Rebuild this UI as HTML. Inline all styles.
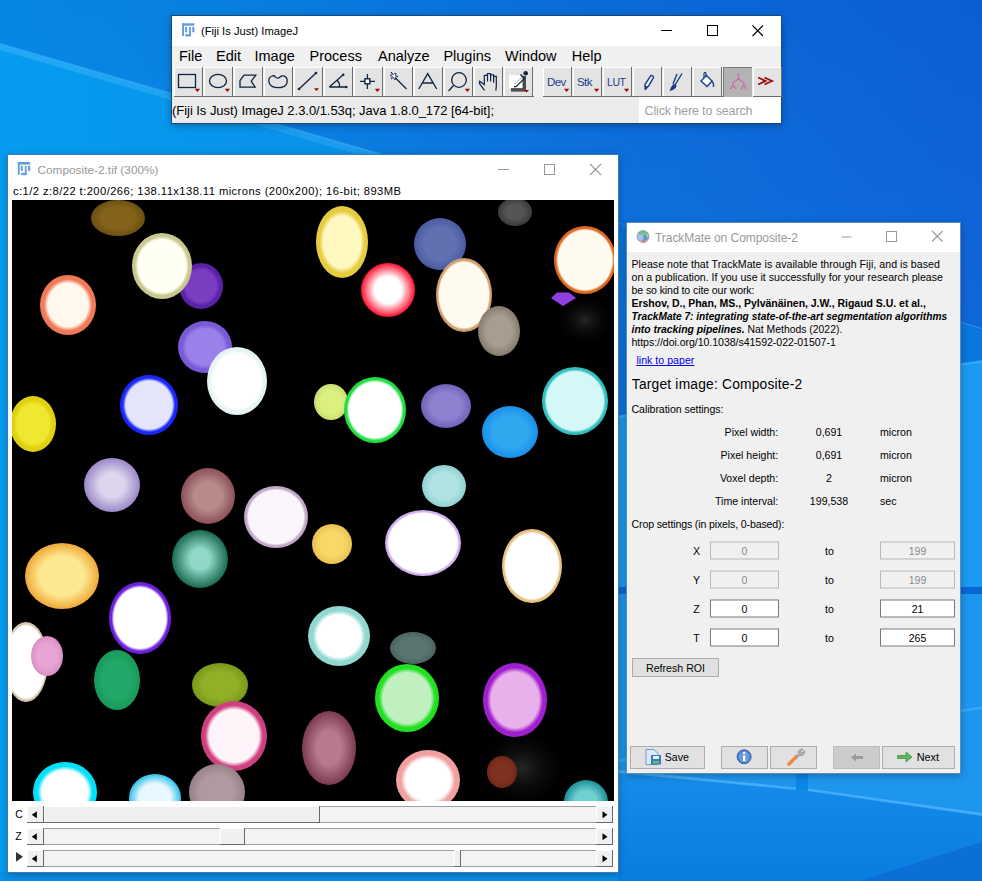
<!DOCTYPE html>
<html><head><meta charset="utf-8">
<style>
*{margin:0;padding:0;box-sizing:border-box}
html,body{width:982px;height:881px;overflow:hidden;background:#0a7fe0}
svg{position:absolute;left:0;top:0}
text{font-family:"Liberation Sans",sans-serif}
.sh{position:absolute;box-shadow:0 2px 7px rgba(0,0,0,0.28)}
</style></head><body>
<svg width="982" height="881" viewBox="0 0 982 881">
<defs>
  <linearGradient id="dgTop" x1="0" y1="0" x2="982" y2="0" gradientUnits="userSpaceOnUse">
    <stop offset="0" stop-color="#0590ea"/>
    <stop offset="0.25" stop-color="#0886e4"/>
    <stop offset="0.6" stop-color="#0a70dc"/>
    <stop offset="1" stop-color="#0c60d6"/>
  </linearGradient>
  <linearGradient id="dgTopV" x1="0" y1="0" x2="0" y2="330" gradientUnits="userSpaceOnUse">
    <stop offset="0" stop-color="#0a4ec0" stop-opacity="0.15"/>
    <stop offset="1" stop-color="#2a90f0" stop-opacity="0.15"/>
  </linearGradient>
  <linearGradient id="dgBase" x1="0" y1="0" x2="982" y2="0" gradientUnits="userSpaceOnUse">
    <stop offset="0" stop-color="#069cf0"/>
    <stop offset="0.5" stop-color="#0a8ce6"/>
    <stop offset="1" stop-color="#1590ea"/>
  </linearGradient>
  <linearGradient id="glow" x1="0" y1="0" x2="0" y2="1">
    <stop offset="0" stop-color="#5cc4ff" stop-opacity="0.55"/>
    <stop offset="1" stop-color="#5cc4ff" stop-opacity="0"/>
  </linearGradient>
</defs>
<rect width="982" height="881" fill="url(#dgBase)"/>
<path d="M0 0 L982 0 L982 329 L0 44 Z" fill="url(#dgTop)"/>
<path d="M0 0 L982 0 L982 329 L0 44 Z" fill="url(#dgTopV)"/>
<path d="M0 44 L982 329 L982 337 L0 50 Z" fill="url(#glow)" opacity="0.6"/>
<path d="M0 43 L982 328 L982 329.5 L0 44.5 Z" fill="#50beff" opacity="0.45"/>
<path d="M618 223 L982 329 L982 361 L618 416.5 Z" fill="#0a76de"/>
<path d="M618 416.5 L982 361 L982 587 L618 587 Z" fill="#1a9af0"/>
<path d="M618 594 L982 594 L982 881 L618 881 Z" fill="#1e96ee"/>
<rect x="618" y="587" width="364" height="7" fill="#0a68d6"/>
<path d="M618 415.5 L982 360 L982 362.5 L618 418 Z" fill="#50c0ff" opacity="0.5"/>
<path d="M618 759.5 L982 706.5 L982 709 L618 762 Z" fill="#50c0ff" opacity="0.45"/>
<linearGradient id="belowE" x1="0" y1="772" x2="0" y2="881" gradientUnits="userSpaceOnUse"><stop offset="0" stop-color="#168cea"/><stop offset="1" stop-color="#0a7ce0"/></linearGradient><path d="M618 772 L796 789 L808 790 L982 815 L982 881 L618 881 Z" fill="url(#belowE)"/>
<path d="M618 770 L796 787.5 L796 790 L618 773 Z" fill="#5ac0ff" opacity="0.6"/>
<path d="M808 788.5 L982 813 L982 816 L808 791 Z" fill="#5ac0ff" opacity="0.6"/>
<rect x="796" y="773" width="12" height="17" fill="#0a86e4"/>
<path d="M860 881 L982 842 L982 881 Z" fill="#0a70d8"/>
<path d="M0 872 L618 872 L618 881 L0 881 Z" fill="#0a8ee8"/>
</svg>
<div class="sh" style="left:171px;top:15px;width:611px;height:109px"></div>
<div class="sh" style="left:7px;top:154px;width:612px;height:719px"></div>
<div class="sh" style="left:626px;top:222px;width:335px;height:552px"></div>
<svg width="982" height="881" viewBox="0 0 982 881">
<defs><radialGradient id="c0"><stop offset="0" stop-color="#84621a"/><stop offset="0.600" stop-color="#84621a"/><stop offset="0.999" stop-color="#6a5010"/><stop offset="1" stop-color="#6a5010"/></radialGradient><radialGradient id="c1"><stop offset="0" stop-color="#7a3cc0"/><stop offset="0.700" stop-color="#7a3cc0"/><stop offset="0.850" stop-color="#5a22a8"/><stop offset="1" stop-color="#5a22a8"/></radialGradient><radialGradient id="c2"><stop offset="0" stop-color="#fffff4"/><stop offset="0.800" stop-color="#fffff4"/><stop offset="0.900" stop-color="#c8c890"/><stop offset="1" stop-color="#c8c890"/></radialGradient><radialGradient id="c3"><stop offset="0" stop-color="#fff8ec"/><stop offset="0.720" stop-color="#fff8ec"/><stop offset="0.860" stop-color="#f07a58"/><stop offset="1" stop-color="#f07a58"/></radialGradient><radialGradient id="c4"><stop offset="0" stop-color="#9a80e8"/><stop offset="0.700" stop-color="#9a80e8"/><stop offset="0.850" stop-color="#7a5ad8"/><stop offset="1" stop-color="#7a5ad8"/></radialGradient><radialGradient id="c5"><stop offset="0" stop-color="#ffffff"/><stop offset="0.800" stop-color="#ffffff"/><stop offset="0.900" stop-color="#e8f4f4"/><stop offset="1" stop-color="#e8f4f4"/></radialGradient><radialGradient id="c6"><stop offset="0" stop-color="#e4e4fa"/><stop offset="0.800" stop-color="#e4e4fa"/><stop offset="0.900" stop-color="#1a28ff"/><stop offset="1" stop-color="#1a28ff"/></radialGradient><radialGradient id="c7"><stop offset="0" stop-color="#f0e830"/><stop offset="0.700" stop-color="#f0e830"/><stop offset="0.850" stop-color="#e0d010"/><stop offset="1" stop-color="#e0d010"/></radialGradient><radialGradient id="c8"><stop offset="0" stop-color="#ddd4ee"/><stop offset="0.450" stop-color="#ddd4ee"/><stop offset="0.999" stop-color="#9a88c8"/><stop offset="1" stop-color="#9a88c8"/></radialGradient><radialGradient id="c9"><stop offset="0" stop-color="#b88a8a"/><stop offset="0.500" stop-color="#b88a8a"/><stop offset="0.999" stop-color="#8a5058"/><stop offset="1" stop-color="#8a5058"/></radialGradient><radialGradient id="c10"><stop offset="0" stop-color="#fbf6fb"/><stop offset="0.860" stop-color="#fbf6fb"/><stop offset="0.930" stop-color="#c0a8c8"/><stop offset="1" stop-color="#c0a8c8"/></radialGradient><radialGradient id="c11"><stop offset="0" stop-color="#fff8c0"/><stop offset="0.720" stop-color="#fff8c0"/><stop offset="0.860" stop-color="#e8cc40"/><stop offset="1" stop-color="#e8cc40"/></radialGradient><radialGradient id="c12"><stop offset="0" stop-color="#6070b0"/><stop offset="0.600" stop-color="#6070b0"/><stop offset="0.999" stop-color="#4a5aa0"/><stop offset="1" stop-color="#4a5aa0"/></radialGradient><radialGradient id="c13"><stop offset="0" stop-color="#555555"/><stop offset="0.500" stop-color="#555555"/><stop offset="0.999" stop-color="#3a3a3a"/><stop offset="1" stop-color="#3a3a3a"/></radialGradient><radialGradient id="c14"><stop offset="0" stop-color="#ffffff"/><stop offset="0.500" stop-color="#ffffff"/><stop offset="0.999" stop-color="#ff1030"/><stop offset="1" stop-color="#ff1030"/></radialGradient><radialGradient id="c15"><stop offset="0" stop-color="#fffaf0"/><stop offset="0.880" stop-color="#fffaf0"/><stop offset="0.940" stop-color="#d0a070"/><stop offset="1" stop-color="#d0a070"/></radialGradient><radialGradient id="c16"><stop offset="0" stop-color="#a89e90"/><stop offset="0.600" stop-color="#a89e90"/><stop offset="0.999" stop-color="#857a6e"/><stop offset="1" stop-color="#857a6e"/></radialGradient><radialGradient id="c17"><stop offset="0" stop-color="#fffaf0"/><stop offset="0.870" stop-color="#fffaf0"/><stop offset="0.935" stop-color="#e06820"/><stop offset="1" stop-color="#e06820"/></radialGradient><radialGradient id="c18"><stop offset="0" stop-color="#dcf080"/><stop offset="0.600" stop-color="#dcf080"/><stop offset="0.999" stop-color="#c8e070"/><stop offset="1" stop-color="#c8e070"/></radialGradient><radialGradient id="c19"><stop offset="0" stop-color="#ffffff"/><stop offset="0.840" stop-color="#ffffff"/><stop offset="0.920" stop-color="#20e040"/><stop offset="1" stop-color="#20e040"/></radialGradient><radialGradient id="c20"><stop offset="0" stop-color="#9080d0"/><stop offset="0.600" stop-color="#9080d0"/><stop offset="0.999" stop-color="#7060b8"/><stop offset="1" stop-color="#7060b8"/></radialGradient><radialGradient id="c21"><stop offset="0" stop-color="#30a8f0"/><stop offset="0.600" stop-color="#30a8f0"/><stop offset="0.999" stop-color="#1a90e8"/><stop offset="1" stop-color="#1a90e8"/></radialGradient><radialGradient id="c22"><stop offset="0" stop-color="#d4f8f8"/><stop offset="0.860" stop-color="#d4f8f8"/><stop offset="0.930" stop-color="#30c0c0"/><stop offset="1" stop-color="#30c0c0"/></radialGradient><radialGradient id="c23"><stop offset="0" stop-color="#b0e4e4"/><stop offset="0.600" stop-color="#b0e4e4"/><stop offset="0.999" stop-color="#90d0d0"/><stop offset="1" stop-color="#90d0d0"/></radialGradient><radialGradient id="c24"><stop offset="0" stop-color="#fce890"/><stop offset="0.600" stop-color="#fce890"/><stop offset="0.999" stop-color="#f0a838"/><stop offset="1" stop-color="#f0a838"/></radialGradient><radialGradient id="c25"><stop offset="0" stop-color="#90d8c8"/><stop offset="0.350" stop-color="#90d8c8"/><stop offset="0.999" stop-color="#1a6a50"/><stop offset="1" stop-color="#1a6a50"/></radialGradient><radialGradient id="c26"><stop offset="0" stop-color="#ffffff"/><stop offset="0.840" stop-color="#ffffff"/><stop offset="0.920" stop-color="#7020e0"/><stop offset="1" stop-color="#7020e0"/></radialGradient><radialGradient id="c27"><stop offset="0" stop-color="#ffffff"/><stop offset="0.900" stop-color="#ffffff"/><stop offset="0.950" stop-color="#d8c8b0"/><stop offset="1" stop-color="#d8c8b0"/></radialGradient><radialGradient id="c28"><stop offset="0" stop-color="#e8a4d4"/><stop offset="0.600" stop-color="#e8a4d4"/><stop offset="0.999" stop-color="#d890c4"/><stop offset="1" stop-color="#d890c4"/></radialGradient><radialGradient id="c29"><stop offset="0" stop-color="#22a868"/><stop offset="0.600" stop-color="#22a868"/><stop offset="0.999" stop-color="#189858"/><stop offset="1" stop-color="#189858"/></radialGradient><radialGradient id="c30"><stop offset="0" stop-color="#90b028"/><stop offset="0.600" stop-color="#90b028"/><stop offset="0.999" stop-color="#789818"/><stop offset="1" stop-color="#789818"/></radialGradient><radialGradient id="c31"><stop offset="0" stop-color="#fff4fa"/><stop offset="0.750" stop-color="#fff4fa"/><stop offset="0.875" stop-color="#d04080"/><stop offset="1" stop-color="#d04080"/></radialGradient><radialGradient id="c32"><stop offset="0" stop-color="#ffffff"/><stop offset="0.720" stop-color="#ffffff"/><stop offset="0.860" stop-color="#00e0f8"/><stop offset="1" stop-color="#00e0f8"/></radialGradient><radialGradient id="c33"><stop offset="0" stop-color="#e8f8ff"/><stop offset="0.600" stop-color="#e8f8ff"/><stop offset="0.999" stop-color="#30c0e8"/><stop offset="1" stop-color="#30c0e8"/></radialGradient><radialGradient id="c34"><stop offset="0" stop-color="#b09aa0"/><stop offset="0.600" stop-color="#b09aa0"/><stop offset="0.999" stop-color="#988088"/><stop offset="1" stop-color="#988088"/></radialGradient><radialGradient id="c35"><stop offset="0" stop-color="#f8d868"/><stop offset="0.600" stop-color="#f8d868"/><stop offset="0.999" stop-color="#e8c050"/><stop offset="1" stop-color="#e8c050"/></radialGradient><radialGradient id="c36"><stop offset="0" stop-color="#ffffff"/><stop offset="0.900" stop-color="#ffffff"/><stop offset="0.950" stop-color="#d0b0f0"/><stop offset="1" stop-color="#d0b0f0"/></radialGradient><radialGradient id="c37"><stop offset="0" stop-color="#ffffff"/><stop offset="0.880" stop-color="#ffffff"/><stop offset="0.940" stop-color="#e8c080"/><stop offset="1" stop-color="#e8c080"/></radialGradient><radialGradient id="c38"><stop offset="0" stop-color="#ffffff"/><stop offset="0.700" stop-color="#ffffff"/><stop offset="0.850" stop-color="#90d8d0"/><stop offset="1" stop-color="#90d8d0"/></radialGradient><radialGradient id="c39"><stop offset="0" stop-color="#5a7470"/><stop offset="0.600" stop-color="#5a7470"/><stop offset="0.999" stop-color="#4a6460"/><stop offset="1" stop-color="#4a6460"/></radialGradient><radialGradient id="c40"><stop offset="0" stop-color="#c0f0c0"/><stop offset="0.750" stop-color="#c0f0c0"/><stop offset="0.875" stop-color="#20e020"/><stop offset="1" stop-color="#20e020"/></radialGradient><radialGradient id="c41"><stop offset="0" stop-color="#eab0ea"/><stop offset="0.750" stop-color="#eab0ea"/><stop offset="0.875" stop-color="#a020d0"/><stop offset="1" stop-color="#a020d0"/></radialGradient><radialGradient id="c42"><stop offset="0" stop-color="#b87890"/><stop offset="0.450" stop-color="#b87890"/><stop offset="0.999" stop-color="#7a3a50"/><stop offset="1" stop-color="#7a3a50"/></radialGradient><radialGradient id="c43"><stop offset="0" stop-color="#ffffff"/><stop offset="0.700" stop-color="#ffffff"/><stop offset="0.850" stop-color="#f0a0a0"/><stop offset="1" stop-color="#f0a0a0"/></radialGradient><radialGradient id="c44"><stop offset="0" stop-color="#803020"/><stop offset="0.600" stop-color="#803020"/><stop offset="0.999" stop-color="#702818"/><stop offset="1" stop-color="#702818"/></radialGradient><radialGradient id="c45"><stop offset="0" stop-color="#70d0d0"/><stop offset="0.500" stop-color="#70d0d0"/><stop offset="0.999" stop-color="#1a9098"/><stop offset="1" stop-color="#1a9098"/></radialGradient></defs>

<g id="ij">
  <rect x="171" y="15" width="611" height="109" fill="#1b4a7a"/>
  <rect x="172" y="16" width="609" height="107" fill="#ffffff"/>
  <rect x="172" y="46" width="609" height="51" fill="#f0f0f0"/>
  <rect x="172" y="97" width="609" height="26" fill="#ebebeb"/>
  <rect x="639" y="97" width="142" height="26" fill="#ffffff"/>
  <g id="fijiicon"><g fill="#5a9ee8">
    <rect x="182.1" y="23.3" width="12.2" height="2.1"/><rect x="182.1" y="23.3" width="1.9" height="12.7"/>
    <rect x="185.1" y="27" width="1.7" height="5.2"/><rect x="189.1" y="27" width="1.8" height="9"/><rect x="185.1" y="34.2" width="5.8" height="1.8"/>
    <rect x="192.3" y="27" width="1.8" height="5.2"/>
  </g>
  <g fill="#000" opacity="0.25"><rect x="184" y="25.4" width="10.4" height="0.8"/><rect x="186.8" y="27.5" width="0.6" height="5.2"/><rect x="194.1" y="27.5" width="0.6" height="5.2"/><rect x="185.5" y="36" width="5.4" height="0.7"/></g></g>
  <text x="201" y="35" font-size="11.2" fill="#000" >(Fiji Is Just) ImageJ</text>
  <rect x="661" y="30" width="11" height="1" fill="#000"/>
  <rect x="707.5" y="25.5" width="10" height="10" fill="none" stroke="#000" stroke-width="1"/>
  <path d="M752.5 25.5 L763 36 M763 25.5 L752.5 36" stroke="#000" stroke-width="1.1"/>
  <g font-size="14.5" fill="#000">
    <text x="179" y="61">File</text><text x="216" y="61">Edit</text><text x="254.5" y="61">Image</text>
    <text x="309.5" y="61">Process</text><text x="378" y="61">Analyze</text><text x="443.4" y="61">Plugins</text>
    <text x="505" y="61">Window</text><text x="571.8" y="61">Help</text>
  </g>
  <rect x="174" y="67" width="29" height="30" fill="#fff"/><rect x="174" y="96" width="30" height="1" fill="#6e6e6e"/><rect x="202" y="67" width="1" height="30" fill="#6e6e6e"/><rect x="175" y="68" width="27" height="28" fill="#e3e3e3"/>
<rect x="204" y="67" width="29" height="30" fill="#fff"/><rect x="204" y="96" width="30" height="1" fill="#6e6e6e"/><rect x="232" y="67" width="1" height="30" fill="#6e6e6e"/><rect x="205" y="68" width="27" height="28" fill="#e3e3e3"/>
<rect x="234" y="67" width="29" height="30" fill="#fff"/><rect x="234" y="96" width="30" height="1" fill="#6e6e6e"/><rect x="262" y="67" width="1" height="30" fill="#6e6e6e"/><rect x="235" y="68" width="27" height="28" fill="#e3e3e3"/>
<rect x="264" y="67" width="29" height="30" fill="#fff"/><rect x="264" y="96" width="30" height="1" fill="#6e6e6e"/><rect x="292" y="67" width="1" height="30" fill="#6e6e6e"/><rect x="265" y="68" width="27" height="28" fill="#e3e3e3"/>
<rect x="294" y="67" width="29" height="30" fill="#fff"/><rect x="294" y="96" width="30" height="1" fill="#6e6e6e"/><rect x="322" y="67" width="1" height="30" fill="#6e6e6e"/><rect x="295" y="68" width="27" height="28" fill="#e3e3e3"/>
<rect x="324" y="67" width="29" height="30" fill="#fff"/><rect x="324" y="96" width="30" height="1" fill="#6e6e6e"/><rect x="352" y="67" width="1" height="30" fill="#6e6e6e"/><rect x="325" y="68" width="27" height="28" fill="#e3e3e3"/>
<rect x="354" y="67" width="29" height="30" fill="#fff"/><rect x="354" y="96" width="30" height="1" fill="#6e6e6e"/><rect x="382" y="67" width="1" height="30" fill="#6e6e6e"/><rect x="355" y="68" width="27" height="28" fill="#e3e3e3"/>
<rect x="384" y="67" width="29" height="30" fill="#fff"/><rect x="384" y="96" width="30" height="1" fill="#6e6e6e"/><rect x="412" y="67" width="1" height="30" fill="#6e6e6e"/><rect x="385" y="68" width="27" height="28" fill="#e3e3e3"/>
<rect x="414" y="67" width="29" height="30" fill="#fff"/><rect x="414" y="96" width="30" height="1" fill="#6e6e6e"/><rect x="442" y="67" width="1" height="30" fill="#6e6e6e"/><rect x="415" y="68" width="27" height="28" fill="#e3e3e3"/>
<rect x="444" y="67" width="29" height="30" fill="#fff"/><rect x="444" y="96" width="30" height="1" fill="#6e6e6e"/><rect x="472" y="67" width="1" height="30" fill="#6e6e6e"/><rect x="445" y="68" width="27" height="28" fill="#e3e3e3"/>
<rect x="474" y="67" width="29" height="30" fill="#fff"/><rect x="474" y="96" width="30" height="1" fill="#6e6e6e"/><rect x="502" y="67" width="1" height="30" fill="#6e6e6e"/><rect x="475" y="68" width="27" height="28" fill="#e3e3e3"/>
<rect x="504" y="67" width="29" height="30" fill="#fff"/><rect x="504" y="96" width="30" height="1" fill="#6e6e6e"/><rect x="532" y="67" width="1" height="30" fill="#6e6e6e"/><rect x="505" y="68" width="27" height="28" fill="#e3e3e3"/>
<rect x="543" y="67" width="29" height="30" fill="#fff"/><rect x="543" y="96" width="30" height="1" fill="#6e6e6e"/><rect x="571" y="67" width="1" height="30" fill="#6e6e6e"/><rect x="544" y="68" width="27" height="28" fill="#e3e3e3"/>
<rect x="573" y="67" width="29" height="30" fill="#fff"/><rect x="573" y="96" width="30" height="1" fill="#6e6e6e"/><rect x="601" y="67" width="1" height="30" fill="#6e6e6e"/><rect x="574" y="68" width="27" height="28" fill="#e3e3e3"/>
<rect x="603" y="67" width="29" height="30" fill="#fff"/><rect x="603" y="96" width="30" height="1" fill="#6e6e6e"/><rect x="631" y="67" width="1" height="30" fill="#6e6e6e"/><rect x="604" y="68" width="27" height="28" fill="#e3e3e3"/>
<rect x="633" y="67" width="29" height="30" fill="#fff"/><rect x="633" y="96" width="30" height="1" fill="#6e6e6e"/><rect x="661" y="67" width="1" height="30" fill="#6e6e6e"/><rect x="634" y="68" width="27" height="28" fill="#e3e3e3"/>
<rect x="663" y="67" width="29" height="30" fill="#fff"/><rect x="663" y="96" width="30" height="1" fill="#6e6e6e"/><rect x="691" y="67" width="1" height="30" fill="#6e6e6e"/><rect x="664" y="68" width="27" height="28" fill="#e3e3e3"/>
<rect x="693" y="67" width="29" height="30" fill="#fff"/><rect x="693" y="96" width="30" height="1" fill="#6e6e6e"/><rect x="721" y="67" width="1" height="30" fill="#6e6e6e"/><rect x="694" y="68" width="27" height="28" fill="#e3e3e3"/>
<rect x="723" y="67" width="29" height="30" fill="#7a7a7a"/><rect x="724" y="68" width="28" height="29" fill="#b3b3b3"/>
<rect x="753" y="67" width="29" height="30" fill="#fff"/><rect x="753" y="96" width="30" height="1" fill="#6e6e6e"/><rect x="781" y="67" width="1" height="30" fill="#6e6e6e"/><rect x="754" y="68" width="27" height="28" fill="#e3e3e3"/>
  <g fill="none" stroke="#0f2540" stroke-width="1.3">
    <rect x="178.5" y="74.5" width="17" height="13"/>
    <ellipse cx="218" cy="81" rx="8.5" ry="6.6"/>
    <path d="M240 87.2 L240 80.5 L244 75.2 L255.8 75.2 L251.2 81.2 L255.2 87.2 Z"/>
    <path d="M272 76 C269 77 268 80 269.5 83.5 C271 87 276 88 281 87.5 C286 87 288 83 287 79 C286 75.5 282 75 280 77 C278.5 78.5 276.5 78.5 275.5 77 C274.5 75.8 273 75.6 272 76 Z"/>
    <path d="M299 89 L316 73"/>
    <path d="M329.3 87 L343.2 74.8 M329.3 87 L346.3 87"/>
    <path d="M337 80 Q340 83 339.5 87"/>
    <path d="M360 81.3 L375 81.3 M367.4 74 L367.4 89"/>
    <path d="M393.5 76 L406.5 89"/>
    <path d="M418.8 89 L427.7 73.6 L436.7 89 M422 83 L433.5 83"/>
    <circle cx="459" cy="80" r="7.3"/><path d="M453.5 85.5 L448.5 91"/>
  </g>
  <rect x="364.9" y="78.8" width="5" height="5" fill="#fff" stroke="#0f2540" stroke-width="1.4"/>
  <g fill="#0f2540"><circle cx="299" cy="89" r="1.3"/><circle cx="316" cy="73" r="1.3"/><circle cx="343.2" cy="74.8" r="1.3"/><circle cx="346.3" cy="87" r="1.3"/></g>
  <path d="M391 72 L392.5 74.5 L390 75.5 L392.5 76.5 L391 79 L393.5 77.5 L395 80 L395.5 77 L398 76.5 L395.5 75.5 L396 73 L393.5 74.5 Z" fill="#fff" stroke="#0f2540" stroke-width="0.8"/>
  <path d="M484.5 90.3 L479.4 83.4 L479.6 81.3 L484.3 84.6 L484.3 75.5 L487.2 75.2 L487.5 73.6 L490.6 73.6 L490.9 74.8 L493.5 74.8 L493.8 76.1 L496.3 76.4 L496.3 86.2 L495.8 90.6 M487.5 75 L487.5 81.5 M490.6 74.5 L490.6 81.5 M493.6 75.5 L493.6 82.7" fill="none" stroke="#0f2540" stroke-width="1.2"/>
  <rect x="511" y="76" width="15" height="15.6" fill="#4d4d4d"/>
  <rect x="509" y="75.2" width="13.5" height="12.9" fill="#ffffff"/>
  <path d="M514.5 84.3 L523 76.5" stroke="#c8d0d8" stroke-width="1.2"/>
  <path d="M514 86.6 L516 86.6 L524.5 78.5" stroke="#0f2540" stroke-width="1.1" fill="none"/>
  <path d="M520.5 74.5 L524.5 78.5" stroke="#0f2540" stroke-width="1.6"/>
  <circle cx="525.7" cy="73.3" r="2.3" fill="#0f2540"/>
  <g fill="#a00000">
    <path d="M194.8 88.8 L200 88.8 L197.4 92Z"/><path d="M224.8 88.8 L230 88.8 L227.4 92Z"/>
    <path d="M314 88.2 L319 88.2 L316.5 91Z"/><path d="M374.8 88.8 L380 88.8 L377.4 92Z"/>
    <path d="M464.8 88.8 L470 88.8 L467.4 92Z"/><path d="M524 90 L529 90 L526.6 92.6Z"/>
    <path d="M564 88.8 L569.2 88.8 L566.6 92Z"/><path d="M594 88.8 L599.2 88.8 L596.6 92Z"/><path d="M624 88.8 L629.2 88.8 L626.6 92Z"/>
  </g>
  <g font-size="11.5" fill="#1c3d8c">
    <text x="547" y="86" letter-spacing="-0.6">Dev</text><text x="577" y="86" letter-spacing="-0.6">Stk</text>
    <text x="607" y="86" font-size="10.5" letter-spacing="-0.4">LUT</text>
  </g>
  <path d="M645.2 89.5 L644.9 84.6 L650.3 76.3 C651.2 74.6 653.9 75.8 653.5 77.7 L648.4 86.3 Z" fill="#eeeeee" stroke="#1c3d8c" stroke-width="1.4" stroke-linejoin="round"/>
  <path d="M645.2 89.8 L644.9 85.2 L648 86.8 Z" fill="#1c3d8c"/>
  <path d="M677 74 L673 84 M682 73.5 L675 85" stroke="#1c3d8c" stroke-width="1.4"/>
  <path d="M669.5 91 C671 87 672 84.5 674.5 84 C677 84 677 87 675 88.5 C673.5 90 671 91 669.5 91Z" fill="#1c3d8c"/>
  <path d="M701 81 L706.5 75.5 L712 81 L707 86.5 Z" fill="#fff" stroke="#1c3d8c" stroke-width="1.4"/>
  <path d="M704 78 L704 73.5 C704 72 706 72 706 73.5 L706 77" fill="none" stroke="#1c3d8c" stroke-width="1.2"/>
  <path d="M712 81 L713.5 84 L713.5 87" stroke="#1c3d8c" stroke-width="1.4" fill="none"/>
  <g stroke="#d24fa6" stroke-width="1.3" fill="none" stroke-dasharray="1.3 0.7">
    <path d="M738.4 73.5 L738.4 79 M738.4 79 L733 82.5 M738.4 79 L743.8 82.5 M733 82.5 L733 85 L730.5 89 M733 85 L735.5 89 M743.8 82.5 L743.8 85 L741.3 89 M743.8 85 L746.3 89"/>
  </g>
  <path d="M758.2 77.5 L765.5 81 L758.2 84.5 M764.5 77.5 L772 81 L764.5 84.5" fill="none" stroke="#a01010" stroke-width="1.9"/>
  <text x="172" y="115" font-size="13" fill="#000" textLength="322" lengthAdjust="spacing" >(Fiji Is Just) ImageJ 2.3.0/1.53q; Java 1.8.0_172 [64-bit];</text>
  <text x="644.5" y="115" font-size="12.5" fill="#a0a0a0" textLength="108" lengthAdjust="spacing" >Click here to search</text>
</g>


<g id="comp">
  <rect x="7" y="154" width="612" height="719" fill="#3a7ab8"/>
  <rect x="8" y="155" width="610" height="717" fill="#ffffff"/>
  <use href="#fijiicon" transform="translate(-164.3 138.7)"/>
  <text x="37.5" y="174.3" font-size="11.8" fill="#999999" textLength="121" lengthAdjust="spacing" >Composite-2.tif (300%)</text>
  <rect x="498" y="169" width="11" height="1" fill="#999"/>
  <rect x="544.5" y="164.5" width="10" height="10" fill="none" stroke="#999" stroke-width="1"/>
  <path d="M590 164 L601 175 M601 164 L590 175" stroke="#999" stroke-width="1.1"/>
  <text x="13" y="195.1" font-size="11.2" fill="#000" textLength="388" lengthAdjust="spacing" >c:1/2 z:8/22 t:200/266; 138.11x138.11 microns (200x200); 16-bit; 893MB</text>
  <rect x="12" y="200" width="602" height="601" fill="#000"/>
  <clipPath id="imgclip"><rect x="12" y="200" width="602" height="601"/></clipPath><g clip-path="url(#imgclip)"><radialGradient id="dim"><stop offset="0" stop-color="#262626"/><stop offset="1" stop-color="#000" stop-opacity="0"/></radialGradient><ellipse cx="522" cy="768" rx="48" ry="42" fill="url(#dim)"/><ellipse cx="585" cy="320" rx="30" ry="26" fill="url(#dim)"/><ellipse cx="118" cy="218" rx="27" ry="18" fill="url(#c0)"/><ellipse cx="201" cy="286" rx="22" ry="23" fill="url(#c1)"/><ellipse cx="162" cy="266" rx="30" ry="33" fill="url(#c2)"/><ellipse cx="68" cy="305" rx="28" ry="30" fill="url(#c3)"/><ellipse cx="205" cy="347" rx="27" ry="26" fill="url(#c4)"/><ellipse cx="237" cy="381" rx="30" ry="34" fill="url(#c5)"/><ellipse cx="149" cy="405" rx="29" ry="30" fill="url(#c6)"/><ellipse cx="33" cy="424" rx="23" ry="28" fill="url(#c7)"/><ellipse cx="112" cy="485" rx="28" ry="27" fill="url(#c8)"/><ellipse cx="208" cy="496" rx="27" ry="28" fill="url(#c9)"/><ellipse cx="276" cy="517" rx="32" ry="31" fill="url(#c10)"/><ellipse cx="342" cy="242" rx="26" ry="36" fill="url(#c11)"/><ellipse cx="440" cy="244" rx="26" ry="26" fill="url(#c12)"/><ellipse cx="515" cy="212" rx="17" ry="14" fill="url(#c13)"/><ellipse cx="388" cy="290" rx="27" ry="27" fill="url(#c14)"/><ellipse cx="464" cy="295" rx="28" ry="37" fill="url(#c15)"/><ellipse cx="499" cy="331" rx="21" ry="25" fill="url(#c16)"/><ellipse cx="585" cy="260" rx="31" ry="34" fill="url(#c17)"/><ellipse cx="331" cy="402" rx="17" ry="18" fill="url(#c18)"/><ellipse cx="375" cy="410" rx="31" ry="33" fill="url(#c19)"/><ellipse cx="446" cy="406" rx="25" ry="22" fill="url(#c20)"/><ellipse cx="510" cy="432" rx="28" ry="26" fill="url(#c21)"/><ellipse cx="575" cy="401" rx="33" ry="34" fill="url(#c22)"/><ellipse cx="444" cy="486" rx="22" ry="21" fill="url(#c23)"/><ellipse cx="62" cy="576" rx="37" ry="33" fill="url(#c24)"/><ellipse cx="200" cy="559" rx="28" ry="29" fill="url(#c25)"/><ellipse cx="140" cy="618" rx="31" ry="36" fill="url(#c26)"/><ellipse cx="26" cy="662" rx="22" ry="40" fill="url(#c27)"/><ellipse cx="47" cy="656" rx="16" ry="20" fill="url(#c28)"/><ellipse cx="117" cy="680" rx="23" ry="30" fill="url(#c29)"/><ellipse cx="220" cy="685" rx="28" ry="22" fill="url(#c30)"/><ellipse cx="234" cy="736" rx="33" ry="35" fill="url(#c31)"/><ellipse cx="65" cy="792" rx="32" ry="30" fill="url(#c32)"/><ellipse cx="155" cy="798" rx="26" ry="24" fill="url(#c33)"/><ellipse cx="217" cy="792" rx="28" ry="28" fill="url(#c34)"/><ellipse cx="332" cy="544" rx="20" ry="20" fill="url(#c35)"/><ellipse cx="423" cy="543" rx="38" ry="33" fill="url(#c36)"/><ellipse cx="532" cy="566" rx="30" ry="37" fill="url(#c37)"/><ellipse cx="339" cy="636" rx="31" ry="30" fill="url(#c38)"/><ellipse cx="413" cy="648" rx="23" ry="16" fill="url(#c39)"/><ellipse cx="407" cy="698" rx="32" ry="34" fill="url(#c40)"/><ellipse cx="515" cy="700" rx="32" ry="37" fill="url(#c41)"/><ellipse cx="329" cy="748" rx="27" ry="37" fill="url(#c42)"/><ellipse cx="428" cy="780" rx="32" ry="30" fill="url(#c43)"/><ellipse cx="502" cy="772" rx="15" ry="16" fill="url(#c44)"/><ellipse cx="586" cy="802" rx="22" ry="22" fill="url(#c45)"/><path d="M551 298 L557 292.5 L569 292.5 L576 298 L563 306 Z" fill="#9040e0"/></g>
  <text x="15.3" y="818.3" font-size="10.5" fill="#000" >C</text><text x="15.3" y="839.7" font-size="10.5" fill="#000" >Z</text>
  <path d="M16 852 L23 856.8 L16 861.7 Z" fill="#333"/>
  <rect x="44" y="806" width="553" height="17" fill="#a0a0a0"/><rect x="44" y="807" width="553" height="15" fill="#f3f3f3"/><rect x="27" y="806" width="17" height="17" fill="#696969"/><rect x="27" y="806" width="16" height="16" fill="#ffffff"/><rect x="28" y="807" width="15" height="15" fill="#f0f0f0"/><rect x="596" y="806" width="17" height="17" fill="#696969"/><rect x="596" y="806" width="16" height="16" fill="#ffffff"/><rect x="597" y="807" width="15" height="15" fill="#f0f0f0"/><path d="M31.8 814.7 L36.8 811.2 L36.8 818.2 Z" fill="#000"/><path d="M607.5 814.7 L602.5 811.2 L602.5 818.2 Z" fill="#000"/><rect x="44" y="806" width="276" height="17" fill="#696969"/><rect x="44" y="806" width="275" height="16" fill="#ffffff"/><rect x="45" y="807" width="274" height="15" fill="#efefef"/>
  <rect x="44" y="828" width="553" height="17" fill="#a0a0a0"/><rect x="44" y="829" width="553" height="15" fill="#f3f3f3"/><rect x="27" y="828" width="17" height="17" fill="#696969"/><rect x="27" y="828" width="16" height="16" fill="#ffffff"/><rect x="28" y="829" width="15" height="15" fill="#f0f0f0"/><rect x="596" y="828" width="17" height="17" fill="#696969"/><rect x="596" y="828" width="16" height="16" fill="#ffffff"/><rect x="597" y="829" width="15" height="15" fill="#f0f0f0"/><path d="M31.8 836.7 L36.8 833.2 L36.8 840.2 Z" fill="#000"/><path d="M607.5 836.7 L602.5 833.2 L602.5 840.2 Z" fill="#000"/><rect x="220" y="828" width="25" height="17" fill="#696969"/><rect x="220" y="828" width="24" height="16" fill="#ffffff"/><rect x="221" y="829" width="23" height="15" fill="#efefef"/>
  <rect x="44" y="850" width="553" height="17" fill="#a0a0a0"/><rect x="44" y="851" width="553" height="15" fill="#f3f3f3"/><rect x="27" y="850" width="17" height="17" fill="#696969"/><rect x="27" y="850" width="16" height="16" fill="#ffffff"/><rect x="28" y="851" width="15" height="15" fill="#f0f0f0"/><rect x="596" y="850" width="17" height="17" fill="#696969"/><rect x="596" y="850" width="16" height="16" fill="#ffffff"/><rect x="597" y="851" width="15" height="15" fill="#f0f0f0"/><path d="M31.8 858.7 L36.8 855.2 L36.8 862.2 Z" fill="#000"/><path d="M607.5 858.7 L602.5 855.2 L602.5 862.2 Z" fill="#000"/><rect x="454" y="850" width="7" height="17" fill="#696969"/><rect x="454" y="850" width="6" height="16" fill="#ffffff"/><rect x="455" y="851" width="5" height="15" fill="#efefef"/>
</g>


<g id="tm">
  <rect x="626" y="222" width="335" height="552" fill="#5a8ac0"/>
  <rect x="627" y="223" width="333" height="550" fill="#f0f0f0"/>
  <rect x="627" y="223" width="333" height="29" fill="#ffffff"/>
  <circle cx="643" cy="236.5" r="6" fill="#9cc4ec" stroke="#777" stroke-width="0.6"/>
  <path d="M638 233 Q643 228 648 233 L646 236 Q643 233 640 235 Z" fill="#6cc090"/>
  <path d="M643 236 L647 234 L648 239 L644 241 Z" fill="#5a90d8"/>
  <path d="M645.5 233.5 L648.5 236 L647 238 Z" fill="#f0c040"/>
  <path d="M642 239 L646 241.5 L645 242.5 L641.5 240.5 Z" fill="#f07040"/>
  <text x="655" y="242" font-size="12" fill="#999999" textLength="143" lengthAdjust="spacing" >TrackMate on Composite-2</text>
  <rect x="841.5" y="236.5" width="10" height="1" fill="#999"/>
  <rect x="886.5" y="231.5" width="10" height="10" fill="none" stroke="#999" stroke-width="1"/>
  <path d="M932 231 L942.5 241.5 M942.5 231 L932 241.5" stroke="#999" stroke-width="1.1"/>
  <text x="631.5" y="268.4" font-size="10.6" fill="#000" textLength="308.3" lengthAdjust="spacing" >Please note that TrackMate is available through Fiji, and is based</text>
  <text x="631.5" y="281.1" font-size="10.6" fill="#000" textLength="311.4" lengthAdjust="spacing" >on a publication. If you use it successfully for your research please</text>
  <text x="631.5" y="294.1" font-size="10.6" fill="#000" textLength="123" lengthAdjust="spacing" >be so kind to cite our work:</text>
  <text x="631.5" y="307" font-size="10.5" fill="#000" textLength="294.3" lengthAdjust="spacing" font-weight="bold">Ershov, D., Phan, MS., Pylvänäinen, J.W., Rigaud S.U. et al.,</text>
  <text x="631.5" y="320" font-size="10.2" fill="#000" textLength="315.6" lengthAdjust="spacing" font-weight="bold" font-style="italic">TrackMate 7: integrating state-of-the-art segmentation algorithms</text>
  <text x="631.5" y="333" font-size="10.4" fill="#000"><tspan font-weight="bold" font-style="italic">into tracking pipelines.</tspan><tspan> Nat Methods (2022).</tspan></text>
  <text x="631.5" y="346" font-size="10.6" fill="#000" textLength="204.3" lengthAdjust="spacing" >https://doi.org/10.1038/s41592-022-01507-1</text>
  <text x="636.4" y="363.7" font-size="10.6" fill="#0000ee" textLength="58" lengthAdjust="spacing" >link to paper</text>
  <rect x="636.4" y="365" width="58" height="1" fill="#0000ee"/>
  <text x="631.8" y="388.7" font-size="13.8" fill="#000" textLength="170.4" lengthAdjust="spacing" >Target image: Composite-2</text>
  <text x="631.5" y="413" font-size="10.6" fill="#000" textLength="92" lengthAdjust="spacing" >Calibration settings:</text>
  <text x="778.2" y="435.7" font-size="10.6" fill="#000" text-anchor="end" >Pixel width:</text><text x="829" y="435.7" font-size="10.6" fill="#000" text-anchor="middle" >0,691</text><text x="880" y="435.7" font-size="10.6" fill="#000" >micron</text><text x="778.2" y="459" font-size="10.6" fill="#000" text-anchor="end" >Pixel height:</text><text x="829" y="459" font-size="10.6" fill="#000" text-anchor="middle" >0,691</text><text x="880" y="459" font-size="10.6" fill="#000" >micron</text><text x="778.2" y="481.7" font-size="10.6" fill="#000" text-anchor="end" >Voxel depth:</text><text x="829" y="481.7" font-size="10.6" fill="#000" text-anchor="middle" >2</text><text x="880" y="481.7" font-size="10.6" fill="#000" >micron</text><text x="778.2" y="504.8" font-size="10.6" fill="#000" text-anchor="end" >Time interval:</text><text x="829" y="504.8" font-size="10.6" fill="#000" text-anchor="middle" >199,538</text><text x="880" y="504.8" font-size="10.6" fill="#000" >sec</text>
  <text x="631.5" y="527.6" font-size="10.6" fill="#000" textLength="152.9" lengthAdjust="spacing" >Crop settings (in pixels, 0-based):</text>
  <text x="696.5" y="554.5" font-size="10.6" fill="#000" text-anchor="middle" >X</text><rect x="710" y="541.5" width="69" height="18" fill="#b8b8b8"/><rect x="711" y="542.5" width="67" height="16" fill="#f0f0f0"/><text x="744.5" y="554.5" font-size="10.5" fill="#8a8a8a" text-anchor="middle" >0</text><text x="829.5" y="554.5" font-size="10.6" fill="#000" text-anchor="middle" >to</text><rect x="880" y="541.5" width="75" height="18" fill="#b8b8b8"/><rect x="881" y="542.5" width="73" height="16" fill="#f0f0f0"/><text x="917.5" y="554.5" font-size="10.5" fill="#8a8a8a" text-anchor="middle" >199</text><text x="696.5" y="583.5" font-size="10.6" fill="#000" text-anchor="middle" >Y</text><rect x="710" y="570.5" width="69" height="18" fill="#b8b8b8"/><rect x="711" y="571.5" width="67" height="16" fill="#f0f0f0"/><text x="744.5" y="583.5" font-size="10.5" fill="#8a8a8a" text-anchor="middle" >0</text><text x="829.5" y="583.5" font-size="10.6" fill="#000" text-anchor="middle" >to</text><rect x="880" y="570.5" width="75" height="18" fill="#b8b8b8"/><rect x="881" y="571.5" width="73" height="16" fill="#f0f0f0"/><text x="917.5" y="583.5" font-size="10.5" fill="#8a8a8a" text-anchor="middle" >199</text><text x="696.5" y="612.5" font-size="10.6" fill="#000" text-anchor="middle" >Z</text><rect x="710" y="599.5" width="69" height="18" fill="#7a7a7a"/><rect x="711" y="600.5" width="67" height="16" fill="#fff"/><text x="744.5" y="612.5" font-size="10.5" fill="#000" text-anchor="middle" >0</text><text x="829.5" y="612.5" font-size="10.6" fill="#000" text-anchor="middle" >to</text><rect x="880" y="599.5" width="75" height="18" fill="#7a7a7a"/><rect x="881" y="600.5" width="73" height="16" fill="#fff"/><text x="917.5" y="612.5" font-size="10.5" fill="#000" text-anchor="middle" >21</text><text x="696.5" y="641.5" font-size="10.6" fill="#000" text-anchor="middle" >T</text><rect x="710" y="628.5" width="69" height="18" fill="#7a7a7a"/><rect x="711" y="629.5" width="67" height="16" fill="#fff"/><text x="744.5" y="641.5" font-size="10.5" fill="#000" text-anchor="middle" >0</text><text x="829.5" y="641.5" font-size="10.6" fill="#000" text-anchor="middle" >to</text><rect x="880" y="628.5" width="75" height="18" fill="#7a7a7a"/><rect x="881" y="629.5" width="73" height="16" fill="#fff"/><text x="917.5" y="641.5" font-size="10.5" fill="#000" text-anchor="middle" >265</text>
  <rect x="632" y="658" width="87" height="19" fill="#adadad"/><rect x="633" y="659" width="85" height="17" fill="#e1e1e1"/>
  <text x="675.5" y="671.5" font-size="10.6" fill="#000" text-anchor="middle" textLength="59" lengthAdjust="spacing" >Refresh ROI</text>
  <rect x="630" y="746" width="75" height="23" fill="#adadad"/><rect x="631" y="747" width="73" height="21" fill="#e1e1e1"/>
  <rect x="721" y="746" width="47" height="23" fill="#adadad"/><rect x="722" y="747" width="45" height="21" fill="#e1e1e1"/>
  <rect x="770" y="746" width="47" height="23" fill="#adadad"/><rect x="771" y="747" width="45" height="21" fill="#e1e1e1"/>
  <rect x="833" y="746" width="47" height="23" fill="#bdbdbd"/><rect x="834" y="747" width="45" height="21" fill="#cccccc"/>
  <rect x="882" y="746" width="73" height="23" fill="#adadad"/><rect x="883" y="747" width="71" height="21" fill="#e1e1e1"/>
  <path d="M646 749.5 L654 749.5 L658 753.5 L658 764.5 L646 764.5 Z" fill="#dfe9f5" stroke="#6a9ad0" stroke-width="1"/>
  <rect x="651" y="755" width="10" height="9.5" fill="#3a78c8"/>
  <rect x="653" y="756" width="6" height="3" fill="#e8f0fa"/>
  <rect x="653" y="761" width="6" height="2.5" fill="#6ac060"/>
  <text x="664.7" y="760.8" font-size="10.6" fill="#000" >Save</text>
  <circle cx="744.1" cy="756.8" r="7" fill="#4a7cc8" stroke="#3a64a8" stroke-width="1"/>
  <circle cx="744.1" cy="756.8" r="5.5" fill="#6a9ae0"/>
  <rect x="743" y="755.5" width="2.3" height="5.5" fill="#fff"/><circle cx="744.15" cy="753" r="1.2" fill="#fff"/>
  <path d="M789 764 L796.5 756.5" stroke="#f08a40" stroke-width="3.6" stroke-linecap="round"/>
  <path d="M795.5 757.5 L798.5 754.5 C797.5 751.5 799.5 748.5 803 749 L801 751.5 L802.5 753 L804.5 750.5 C805.5 754 802.5 756.5 799.5 755.5 L796.5 758.5 Z" fill="#b0b0b0" stroke="#8a8a8a" stroke-width="0.7"/>
  <path d="M851 757.5 L856 753.5 L856 756 L863 756 L863 759 L856 759 L856 761.5 Z" fill="#9a9a9a"/>
  <path d="M897.5 755.5 L906 755.5 L906 752 L912 757 L906 762 L906 758.5 L897.5 758.5 Z" fill="#5cb85c" stroke="#3a8a3a" stroke-width="0.7"/>
  <text x="916.7" y="760.8" font-size="10.9" fill="#000" >Next</text>
</g>

</svg>
</body></html>
